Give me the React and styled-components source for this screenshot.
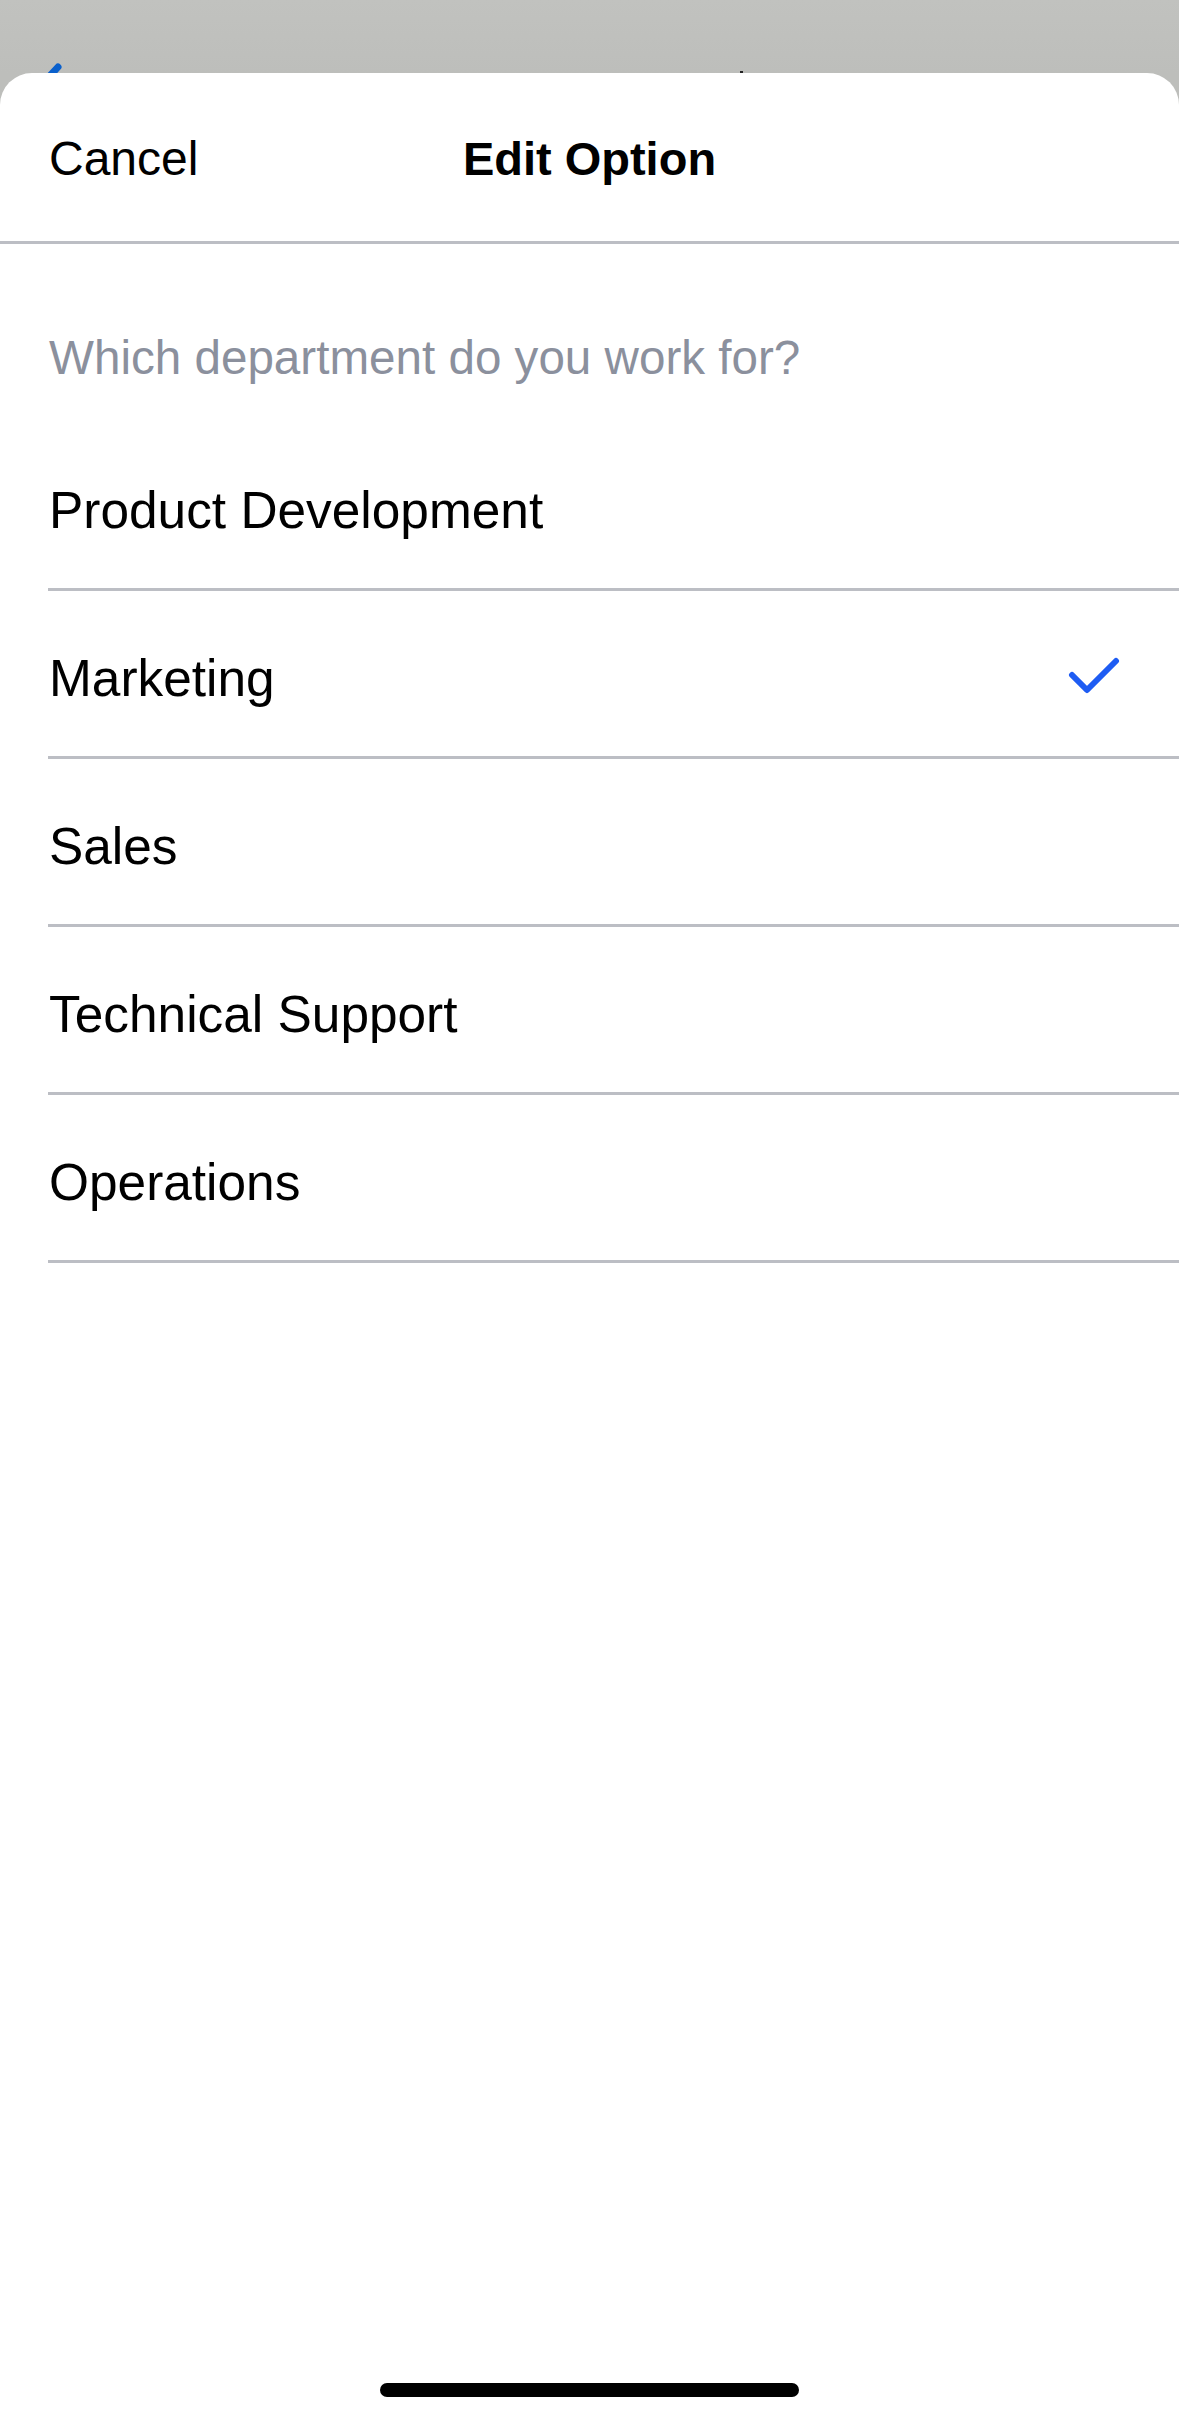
import React from "react";
import styled, { createGlobalStyle } from "styled-components";

const GlobalStyle = createGlobalStyle`
  html, body {
    margin: 0;
    padding: 0;
    background: #bebfbc;
  }
  * { box-sizing: border-box; }
`;

const Page = styled.div`
  width: 1179px;
  height: 2422px;
  display: flex;
  flex-direction: column;
  background: linear-gradient(#c1c2bf, #bdbebb 73px);
  font-family: "Liberation Sans", Arial, sans-serif;
  overflow: hidden;
`;

const Backdrop = styled.div`
  position: relative;
  height: 73px;
  flex: none;
  overflow: hidden;
`;

const PeekChevron = styled.svg`
  position: absolute;
  left: 30px;
  top: 60px;
`;

const PeekDot = styled.span`
  position: absolute;
  left: 740px;
  top: 71px;
  width: 3px;
  height: 2px;
  background: #222;
`;

const Sheet = styled.div`
  flex: 1;
  display: flex;
  flex-direction: column;
  background: #fff;
  border-radius: 32px 32px 0 0;
`;

const Header = styled.header`
  height: 171px;
  padding: 3px 48px 0;
  display: grid;
  grid-template-columns: 1fr auto 1fr;
  align-items: center;
  border-bottom: 3px solid #bcbec4;
`;

const CancelButton = styled.span`
  justify-self: start;
  font-size: 48px;
  color: #000;
  padding-left: 1px;
`;

const Title = styled.h1`
  margin: 0;
  font-size: 47px;
  font-weight: 700;
  color: #000;
`;

const Question = styled.div`
  padding: 86px 0 37px 49px;
  font-size: 47.6px;
  line-height: 56px;
  color: #8b909d;
`;

const List = styled.ul`
  list-style: none;
  margin: 0;
  padding: 0;
`;

const Row = styled.li`
  margin-left: 48px;
  height: 168px;
  padding: 8px 59px 0 1px;
  display: flex;
  align-items: center;
  justify-content: space-between;
  border-bottom: 3px solid #bcbec4;
  font-size: 51.4px;
  color: #000;
`;

const Check = styled.svg`
  flex: none;
  margin-top: -4px;
`;

const HomeIndicator = styled.div`
  margin: auto auto 25px;
  width: 419px;
  height: 14px;
  border-radius: 7px;
  background: #000;
`;

const options = [
  "Product Development",
  "Marketing",
  "Sales",
  "Technical Support",
  "Operations",
];

export default function App() {
  const selected = "Marketing";
  return (
    <Page>
      <GlobalStyle />
      <Backdrop>
        <PeekChevron width="40" height="60" viewBox="0 0 40 60">
          <path
            d="M28 7 L5 32 L28 57"
            fill="none"
            stroke="#0a60cc"
            strokeWidth="7"
            strokeLinecap="round"
            strokeLinejoin="round"
          />
        </PeekChevron>
        <PeekDot />
      </Backdrop>
      <Sheet>
        <Header>
          <CancelButton>Cancel</CancelButton>
          <Title>Edit Option</Title>
          <span />
        </Header>
        <Question>Which department do you work for?</Question>
        <List>
          {options.map((o) => (
            <Row key={o}>
              <span>{o}</span>
              {o === selected && (
                <Check width="52" height="40" viewBox="0 0 52 40">
                  <path
                    d="M4 19 L19 34 L48 5"
                    fill="none"
                    stroke="#1e5cf3"
                    strokeWidth="6"
                    strokeLinecap="round"
                    strokeLinejoin="round"
                  />
                </Check>
              )}
            </Row>
          ))}
        </List>
        <HomeIndicator />
      </Sheet>
    </Page>
  );
}
